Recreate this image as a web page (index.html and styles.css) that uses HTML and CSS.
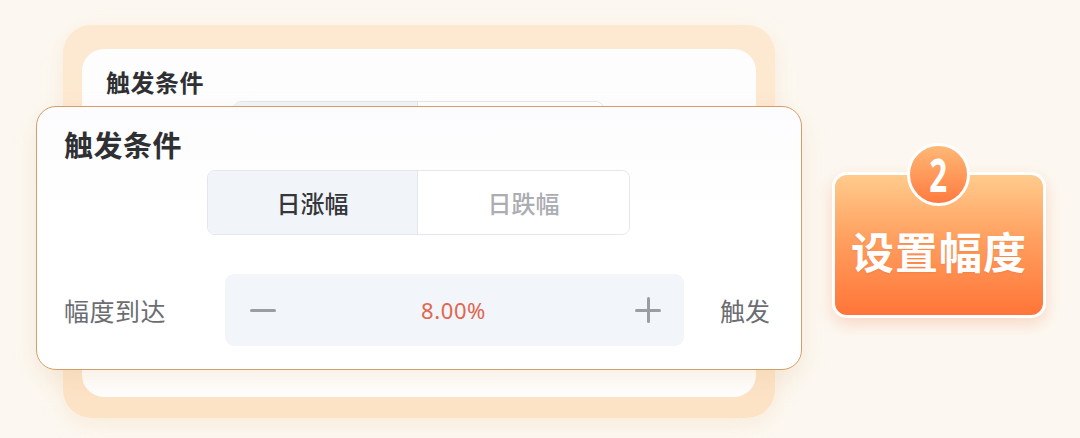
FILE: index.html
```html
<!DOCTYPE html>
<html lang="zh">
<head>
<meta charset="utf-8">
<link rel="stylesheet" href="styles.css">
</head>
<body>
<div class="scene">
  <div class="stack">
    <div class="back-card">
      <div class="back-title">触发条件</div>
      <div class="back-seg"><div class="back-seg-left"></div><div class="back-seg-right"></div></div>
    </div>
  </div>

  <div class="front-card">
    <div class="front-title">触发条件</div>
    <div class="seg">
      <div class="seg-item seg-active">日涨幅</div>
      <div class="seg-item seg-inactive">日跌幅</div>
    </div>
    <div class="row">
      <div class="row-label">幅度到达</div>
      <div class="stepper">
        <span class="minus"></span>
        <span class="value">8.00%</span>
        <span class="plus"></span>
      </div>
      <div class="row-suffix">触发</div>
    </div>
  </div>

  <div class="badge">
    <div class="badge-num"><span>2</span></div>
    <div class="badge-text">设置幅度</div>
  </div>
</div>
</body>
</html>
```

FILE: styles.css
```css
* { box-sizing: border-box; }
html, body { margin: 0; padding: 0; }
body {
  width: 1080px;
  height: 438px;
  overflow: hidden;
  background: #fcf8f1;
  font-family: "Noto Sans CJK SC", "Noto Sans", sans-serif;
}
.scene {
  position: relative;
  width: 1080px;
  height: 438px;
  display: flex;
  align-items: flex-start;
}
.stack {
  margin-left: 63px;
  margin-top: 25px;
  width: 712px;
  height: 393px;
  border-radius: 28px;
  background: linear-gradient(180deg, #fde9d2 0%, #fde3c6 100%);
  padding: 24px 19px 21px 19px;
  box-shadow: 0 6px 22px rgba(240, 200, 150, 0.25);
}
.back-card {
  width: 100%;
  height: 100%;
  background: linear-gradient(180deg, #fdfdfe 0%, #ffffff 100%);
  border-radius: 22px;
  padding: 16px 0 0 24px;
  overflow: hidden;
}
.back-title {
  font-size: 24px;
  line-height: 34px;
  font-weight: 700;
  color: #2f3033;
  letter-spacing: 0.5px;
}
.back-seg {
  margin-top: 2px;
  margin-left: 127px;
  width: 371px;
  height: 60px;
  display: flex;
  border: 1px solid #e3e6ec;
  border-radius: 8px;
  overflow: hidden;
}
.back-seg-left { width: 184px; background: #f1f4f9; border-right: 1px solid #e3e6ec; }
.back-seg-right { flex: 1; background: #fff; }

.front-card {
  position: absolute;
  left: 36px;
  top: 106px;
  width: 766px;
  height: 264px;
  background: linear-gradient(180deg, #fcfcfe 0%, #ffffff 40%);
  border: 1.5px solid #d39f68;
  border-radius: 20px;
  padding: 19px 0 0 27px;
  box-shadow: 0 10px 24px rgba(225, 180, 130, 0.22);
}
.front-title {
  font-size: 29px;
  line-height: 37px;
  font-weight: 700;
  color: #2f3033;
  letter-spacing: 0.5px;
}
.seg {
  margin-top: 7px;
  margin-left: 143px;
  width: 423px;
  height: 65px;
  display: flex;
  border: 1.5px solid #e3e6ec;
  border-radius: 8px;
  overflow: hidden;
}
.seg-item {
  display: flex;
  align-items: center;
  justify-content: center;
  font-size: 24px;
  font-weight: 500;
}
.seg-active {
  width: 210px;
  background: #f1f4f9;
  color: #34363a;
  border-right: 1.5px solid #e3e6ec;
}
.seg-inactive {
  flex: 1;
  background: #fff;
  color: #abadb2;
}
.row {
  margin-top: 39px;
  display: flex;
  align-items: center;
}
.row-label {
  width: 161px;
  font-size: 25px;
  color: #6b6d72;
  letter-spacing: 0.5px;
}
.stepper {
  width: 459px;
  height: 72px;
  border-radius: 9px;
  background: #f2f5fa;
  display: flex;
  align-items: center;
  justify-content: space-between;
  padding: 0 23px 0 25px;
}
.minus {
  display: block;
  width: 26px;
  height: 3px;
  border-radius: 2px;
  background: #9b9da3;
}
.plus {
  display: block;
  position: relative;
  width: 26px;
  height: 26px;
}
.plus::before, .plus::after {
  content: "";
  position: absolute;
  background: #9b9da3;
  border-radius: 2px;
}
.plus::before { left: 0; top: 11.5px; width: 26px; height: 3px; }
.plus::after { top: 0; left: 11.5px; width: 3px; height: 26px; }
.value {
  font-family: "Noto Sans", sans-serif;
  font-size: 22px;
  color: #e1654f;
  letter-spacing: 0.6px;
  margin-left: -4px;
}
.row-suffix {
  margin-left: 36px;
  font-size: 25px;
  color: #6b6d72;
}

.badge {
  position: relative;
  margin-left: 57px;
  margin-top: 172px;
  width: 214px;
  height: 146px;
  border: 3px solid #ffffff;
  border-radius: 15px;
  background: linear-gradient(180deg, #ffcb8c 0%, #ffa060 45%, #ff7538 100%);
  box-shadow: 0 6px 16px rgba(240, 130, 80, 0.28);
  display: flex;
  align-items: center;
  justify-content: center;
}
.badge-num {
  position: absolute;
  left: 72px;
  top: -32px;
  width: 63px;
  height: 63px;
  border-radius: 50%;
  border: 3px solid #ffffff;
  background: linear-gradient(180deg, #ffb877 0%, #ff9a5a 50%, #ff7a40 100%);
  display: flex;
  align-items: center;
  justify-content: center;
}
.badge-num span {
  display: block;
  font-family: "Noto Sans", sans-serif;
  font-size: 46px;
  line-height: 46px;
  font-weight: 700;
  color: #ffffff;
  transform: scaleX(0.68);
  margin-top: -2px;
}
.badge-text {
  margin-top: 10px;
  font-size: 43px;
  font-weight: 700;
  color: #ffffff;
  letter-spacing: 1px;
  text-shadow: 0 1px 2px rgba(200, 80, 30, 0.2);
}
```
